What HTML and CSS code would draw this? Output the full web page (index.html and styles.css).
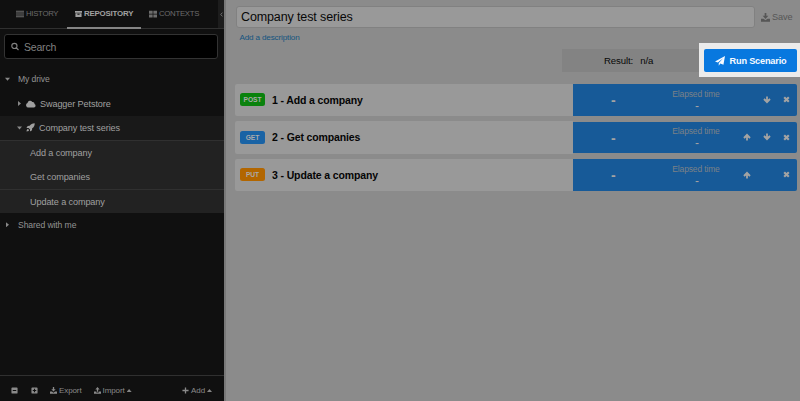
FILE: index.html
```html
<!DOCTYPE html>
<html lang="en">
<head>
<meta charset="utf-8">
<title>Company test series</title>
<link rel="stylesheet" href="styles.css">
</head>
<body>
<svg class="defs" aria-hidden="true">
  <symbol id="list" viewBox="0 0 16 16"><path d="M0 1.500h16v2H0zM0 5.200h16v2H0zM0 8.900h16v2H0zM0 12.600h16v2H0z"/></symbol>
  <symbol id="archive" viewBox="0 0 16 16"><path fill-rule="evenodd" d="M0 1h16v4H0zM1 6h14v9H1zM5.500 7.500v2h5v-2z"/></symbol>
  <symbol id="grid" viewBox="0 0 16 16"><path d="M0 1.500h7.300v6H0zM8.700 1.500H16v6H8.700zM0 8.800h7.300v6H0zM8.700 8.800H16v6H8.700z"/></symbol>
  <symbol id="search" viewBox="0 0 16 16"><path fill="none" stroke="currentColor" stroke-width="2.300" d="M12 6.800a5.200 5.200 0 1 1-10.400 0a5.200 5.200 0 0 1 10.400 0zM10.500 10.500l4.500 4.500"/></symbol>
  <symbol id="cloud" viewBox="0 0 20 16"><path d="M5 15a4.700 4.700 0 0 1-2-9A5.200 5.200 0 0 1 12.500 4a3.300 3.300 0 0 1 4.200 4.200A3.500 3.500 0 0 1 16 15z"/></symbol>
  <symbol id="rocket" viewBox="0 0 16 16"><path d="M15.500.5C11 .5 8.500 2 6.500 5L3 5.300.8 9l3.700-.2 2.700 2.700L7 15.200 10.700 13l.3-3.500c3-2 4.500-4.500 4.500-9zM3.500 10.500c-2 .5-2.500 2.500-2.500 4.500 2 0 4-.5 4.500-2.500z"/></symbol>
  <symbol id="minus" viewBox="0 0 16 16"><path fill-rule="evenodd" d="M3 1h10a2 2 0 0 1 2 2v10a2 2 0 0 1-2 2H3a2 2 0 0 1-2-2V3a2 2 0 0 1 2-2zM4 6.700v2.600h8V6.700z"/></symbol>
  <symbol id="plusbox" viewBox="0 0 16 16"><path fill-rule="evenodd" d="M3 1h10a2 2 0 0 1 2 2v10a2 2 0 0 1-2 2H3a2 2 0 0 1-2-2V3a2 2 0 0 1 2-2zM6.700 4v2.700H4v2.600h2.700V12h2.600V9.300H12V6.700H9.300V4z"/></symbol>
  <symbol id="plus" viewBox="0 0 16 16"><path d="M6.500 1h3v5.500H15v3H9.500V15h-3V9.500H1v-3h5.500z"/></symbol>
  <symbol id="download" viewBox="0 0 16 16"><path d="M6.500 0h3v5H13L8 10.500 3 5h3.500zM0 10h4.500L8 13l3.500-3H16v5.500H0z"/></symbol>
  <symbol id="upload" viewBox="0 0 16 16"><path d="M6.500 11h3V5.500H13L8 0 3 5.500h3.500zM0 10h5v2.500h6V10h5v5.500H0z"/></symbol>
  <symbol id="plane" viewBox="0 0 16 16"><path d="M16 0 13.500 14l-5-2L6 15.500v-4.300L13 3.500 4.500 10.500 0 8.700z"/></symbol>
  <symbol id="down" viewBox="0 0 16 16"><path d="M6.200 1h3.600v6L13 4.700l2.300 2.600L8 15.200.7 7.300 3 4.700 6.200 7z"/></symbol>
  <symbol id="up" viewBox="0 0 16 16"><path d="M6.200 15h3.600V9l3.200 2.300 2.300-2.600L8 .8.700 8.700 3 11.300 6.200 9z"/></symbol>
  <symbol id="close" viewBox="0 0 16 16"><path d="M4.500 1 8 4.500 11.500 1 15 4.500 11.500 8l3.500 3.500-3.500 3.500L8 11.500 4.500 15 1 11.500 4.500 8 1 4.500z"/></symbol>
</svg>
<div class="app">
  <aside class="sidebar">
    <nav class="tabs">
      <a class="tab tab-history"><svg><use href="#list"/></svg>HISTORY</a>
      <a class="tab tab-active"><svg><use href="#archive"/></svg>REPOSITORY</a>
      <a class="tab tab-contexts"><svg><use href="#grid"/></svg>CONTEXTS</a>
      <span class="collapse"><svg viewBox="0 0 4 6"><path d="M3.200.5 1 3l2.200 2.500" fill="none" stroke="currentColor"/></svg></span>
    </nav>
    <div class="search"><svg><use href="#search"/></svg><span>Search</span></div>
    <div class="tree">
      <div class="row root"><i class="caret open"></i><span>My drive</span></div>
      <div class="row project"><i class="caret"></i><svg class="cloud"><use href="#cloud"/></svg><span>Swagger Petstore</span></div>
      <div class="row project selected"><i class="caret open"></i><svg class="rocket"><use href="#rocket"/></svg><span>Company test series</span></div>
      <div class="row request"><span>Add a company</span></div>
      <div class="row request plain"><span>Get companies</span></div>
      <div class="row request"><span>Update a company</span></div>
      <div class="row root shared"><i class="caret"></i><span>Shared with me</span></div>
    </div>
    <footer class="tools">
      <svg><use href="#minus"/></svg>
      <svg class="expand"><use href="#plusbox"/></svg>
      <span class="tool export"><svg><use href="#download"/></svg>Export</span>
      <span class="tool import"><svg><use href="#upload"/></svg>Import<i class="caret-up"></i></span>
      <span class="tool add"><svg><use href="#plus"/></svg>Add<i class="caret-up"></i></span>
    </footer>
  </aside>
  <main class="main">
    <header class="heading">
      <div class="title">Company test series</div>
      <div class="save"><svg><use href="#download"/></svg>Save</div>
    </header>
    <a class="describe">Add a description</a>
    <section class="runbar">
      <div class="result"><span>Result:</span><span>n/a</span></div>
      <div class="spotlight"><div class="run"><svg><use href="#plane"/></svg>Run Scenario</div></div>
    </section>
    <section class="steps">
      <article class="step">
        <div class="step-name"><b class="badge post">POST</b><span>1 - Add a company</span></div>
        <div class="status"><b class="dash">-</b><div class="elapsed"><span>Elapsed time</span><span class="value">-</span></div><div class="actions"><svg class="hidden"><use href="#up"/></svg><svg><use href="#down"/></svg><svg><use href="#close"/></svg></div></div>
      </article>
      <article class="step">
        <div class="step-name"><b class="badge get">GET</b><span>2 - Get companies</span></div>
        <div class="status"><b class="dash">-</b><div class="elapsed"><span>Elapsed time</span><span class="value">-</span></div><div class="actions"><svg><use href="#up"/></svg><svg><use href="#down"/></svg><svg><use href="#close"/></svg></div></div>
      </article>
      <article class="step">
        <div class="step-name"><b class="badge put">PUT</b><span>3 - Update a company</span></div>
        <div class="status"><b class="dash">-</b><div class="elapsed"><span>Elapsed time</span><span class="value">-</span></div><div class="actions"><svg><use href="#up"/></svg><svg class="hidden"><use href="#down"/></svg><svg><use href="#close"/></svg></div></div>
      </article>
    </section>
  </main>
</div>
</body>
</html>
```
FILE: styles.css
```css
* { box-sizing: border-box; }
body { margin: 0; font-family: "Liberation Sans", Arial, sans-serif; overflow: hidden; }
svg { width: 8px; height: 8px; fill: currentColor; flex: none; display: block; }
.defs { position: absolute; width: 0; height: 0; }
.app { display: flex; width: 800px; height: 401px; background: #8b8b8b; }

.sidebar { width: 224px; display: flex; flex-direction: column; background: #101010; color: #929292; flex: none; }
.tabs { display: flex; height: 29px; border-bottom: 1px solid #303030; font-size: 7.800px; letter-spacing: -.3px; color: #6c6c6c; flex: none; }
.tab { display: flex; align-items: center; gap: 2px; height: 29px; padding-bottom: 2px; white-space: nowrap; }
.tab-history { width: 67px; padding-left: 16px; }
.tab-active { width: 74px; padding-left: 8px; font-weight: bold; font-size: 7.900px; letter-spacing: -.2px; color: #a0a0a0; border-bottom: 2px solid #858585; padding-bottom: 0; }
.tab-active svg { width: 7px; }
.tab-contexts { width: 77px; padding-left: 8px; }
.collapse { width: 6px; height: 28px; background: #1d1d1d; display: flex; align-items: center; justify-content: center; color: #888; }
.collapse svg { width: 3px; height: 5px; }
.search { display: flex; align-items: center; gap: 5px; width: 214px; height: 25px; margin: 5px 0 8px 4px; padding-left: 6px; background: #000; border: 1px solid #333; border-radius: 3px; font-size: 10.500px; letter-spacing: -.2px; color: #808080; flex: none; }
.search svg { width: 8px; height: 9px; }
.row { display: flex; align-items: center; height: 24.400px; font-size: 9.100px; letter-spacing: -.1px; white-space: nowrap; color: #a0a0a0; }
.root { padding-left: 5px; font-size: 8.600px; color: #939393; }
.root .caret { margin-right: 8px; }
.project { padding-left: 17px; }
.project .caret { margin-right: 4px; }
.caret { width: 5px; height: 5px; background: #888; clip-path: polygon(20% 0, 80% 50%, 20% 100%); flex: none; }
.caret.open { clip-path: polygon(0 20%, 100% 20%, 50% 80%); }
.cloud { width: 10px; margin-right: 4px; }
.rocket { width: 9px; height: 9px; margin-right: 4px; }
.selected { background: #191919; }
.request { background: #222; border-top: 1px solid #303030; padding-left: 30px; }
.plain { border-top-color: #222; }
.shared { height: 23px; }
.tools { display: flex; align-items: center; height: 26px; margin-top: auto; padding: 4px 12px 0 11px; border-top: 1px solid #303030; font-size: 8px; letter-spacing: -.1px; color: #8a8a8a; }
.tools > svg { width: 7px; height: 7px; }
.tools .expand { margin-left: 13px; }
.tool { display: flex; align-items: center; gap: 2px; }
.tool svg { width: 7px; height: 7px; }
.export { margin-left: 12px; }
.import { margin-left: 12px; }
.add { margin-left: auto; }
.caret-up { width: 5px; height: 3px; background: #858585; clip-path: polygon(0 100%, 50% 0, 100% 100%); }

.main { flex: 1; min-width: 0; display: flex; flex-direction: column; border-left: 2px solid #787878; }
.heading { display: flex; padding: 6px 0 0 10px; }
.title { width: 519px; height: 22px; padding-left: 4px; line-height: 21px; font-size: 12.500px; letter-spacing: -.12px; color: #080808; background: #999; border: 1px solid #818181; border-radius: 3px; }
.save { display: flex; align-items: center; gap: 2px; margin-left: 6px; font-size: 9.200px; letter-spacing: -.15px; color: #565656; }
.save svg { width: 9px; height: 9px; }
.describe { margin: 5px 0 0 13.500px; height: 9px; line-height: 9px; font-size: 8.100px; letter-spacing: -.15px; color: #135480; }
.runbar { display: flex; justify-content: flex-end; align-items: center; height: 34px; margin-top: 1px; }
.result { display: flex; gap: 7px; width: 137px; height: 23px; padding-left: 42px; align-items: center; background: #838383; font-size: 9.600px; letter-spacing: -.1px; color: #080808; }
.spotlight { width: 101px; height: 34px; padding: 6px 3px 5px 5px; background: #ebebeb; }
.run { display: flex; align-items: center; justify-content: center; gap: 5px; height: 23px; background: #0878df; border-radius: 2px; color: #f6faff; font-size: 9.200px; letter-spacing: -.2px; font-weight: bold; white-space: nowrap; }
.run svg { width: 10px; height: 10px; }
.steps { display: flex; flex-direction: column; gap: 5px; padding: 6.500px 3px 0 9px; }
.step { display: flex; align-items: center; height: 32.600px; }
.step-name { display: flex; align-items: center; gap: 7px; width: 338px; height: 100%; padding-left: 5px; background: #999; border-radius: 2px 0 0 2px; font-size: 10.500px; letter-spacing: -.13px; font-weight: bold; color: #050505; }
.badge { width: 25px; height: 13px; border-radius: 2.500px; display: flex; align-items: center; justify-content: center; font-size: 6.700px; letter-spacing: -.1px; color: #aaa; }
.post { background: #0a820d; }
.get { background: #1963a5; }
.put { background: #b26600; }
.status { display: flex; width: 224px; height: 31.500px; background: #175a98; border-radius: 0 2px 2px 0; color: #a3a3a3; }
.dash { width: 6px; margin: 0 0 0 38px; font-size: 14px; line-height: 32px; }
.elapsed { width: 48px; margin-left: 55px; display: flex; flex-direction: column; align-items: center; padding-top: 4.500px; font-size: 8.500px; letter-spacing: -.15px; line-height: 10px; color: #7c8187; white-space: nowrap; }
.value { font-size: 12px; line-height: 15px; color: #a3a3a3; margin-left: 2px; }
.actions { display: flex; align-items: center; gap: 12px; margin-left: 22.500px; }
.actions svg:last-child { width: 7px; height: 7px; }
.hidden { visibility: hidden; }
```
